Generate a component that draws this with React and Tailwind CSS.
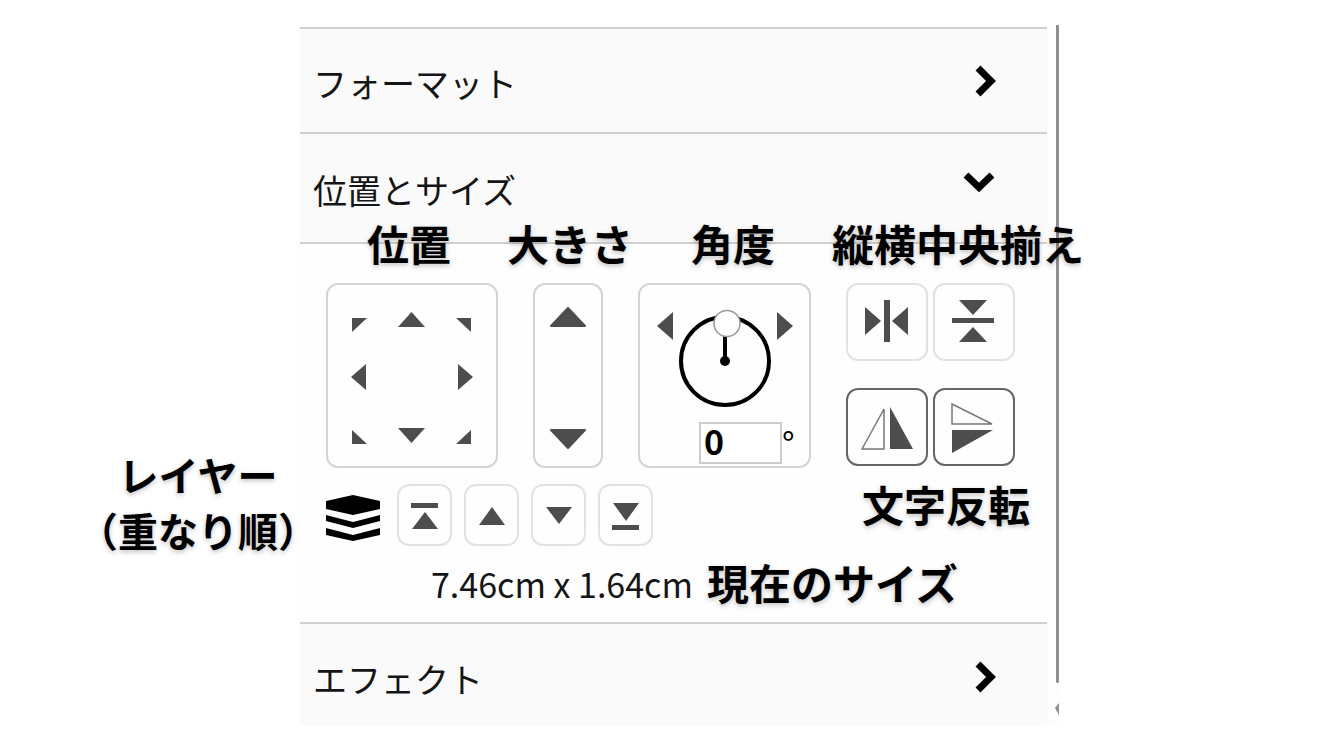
import React, { useState } from 'react';

const moveArrows = [
  { label: '左上へ移動', points: '18,28 33,28 18,42' },
  { label: '上へ移動', points: '12,37 39,37 25.5,22' },
  { label: '右上へ移動', points: '18,28 33,28 33,42' },
  { label: '左へ移動', points: '17,30 32,17 32,43' },
  null,
  { label: '右へ移動', points: '20,17 35,30 20,43' },
  { label: '左下へ移動', points: '18,26 18,40 33,40' },
  { label: '下へ移動', points: '12,24 39,24 25.5,39' },
  { label: '右下へ移動', points: '33,26 33,40 18,40' },
];

const layerButtons = [
  { label: '最前面へ', d: 'M2 4h27v5H2zM16 13L29 30H3z' },
  { label: '前面へ', d: 'M16 8L29 26H3z' },
  { label: '背面へ', d: 'M3 8H29L16 25z' },
  { label: '最背面へ', d: 'M3 4H29L16 22zM2 26h27v5H2z' },
];

const alignButtons = [
  { label: '左右中央揃え', d: 'M25 6h6v42h-6zM6 13L22 27L6 41zM49 13L33 27L49 41z' },
  { label: '上下中央揃え', d: 'M13 6H41L27 21zM6 24h42v5H6zM27 33L41 48H13z' },
];

const flipButtons = [
  { label: '左右反転', outline: 'M3 50L25 10V50z', d: 'M31 8V50H54z' },
  { label: '上下反転', outline: 'M6 5V25H46z', d: 'M6 31H47L6 54z' },
];

const noteClass =
  'whitespace-nowrap leading-[56px] font-bold [text-shadow:0_2px_5px_rgba(0,0,0,0.25)]';

const Chevron = ({ open }) =>
  open ? (
    <svg className="w-8 h-8 mr-[52px] mb-3" viewBox="0 0 32 32" fill="none" stroke="#000" strokeWidth="7">
      <path d="M3 9L16 21.5L29 9" />
    </svg>
  ) : (
    <svg className="w-8 h-8 mr-[46px]" viewBox="0 0 32 32" fill="none" stroke="#000" strokeWidth="7">
      <path d="M9 3L22 16L9 29" />
    </svg>
  );

const SectionHeader = ({ title, open, className }) => (
  <button
    type="button"
    aria-expanded={Boolean(open)}
    className={`flex w-full items-center justify-between border-t-2 border-[#d0d0d0] bg-[#fafafa] pl-[13px] text-left ${className}`}
  >
    <span className="pt-1 text-[34px] leading-[50px] text-[#151515]">{title}</span>
    <Chevron open={open} />
  </button>
);

const PositionPad = () => (
  <div className="relative w-[172px] h-[185px] shrink-0 rounded-xl border-2 border-[#d4d4d4]">
    <span className={`${noteClass} absolute bottom-full left-[39px] mb-3.5 text-[42px]`}>位置</span>
    <div className="grid grid-cols-3 px-1.5 py-[5px]">
      {moveArrows.map((arrow, i) =>
        arrow ? (
          <button key={arrow.label} type="button" aria-label={arrow.label} className="w-[52px] h-[57px]">
            <svg className="w-full h-full" viewBox="0 0 52 57" fill="#4d4d4d">
              <polygon points={arrow.points} />
            </svg>
          </button>
        ) : (
          <span key={i} />
        )
      )}
    </div>
  </div>
);

const SizePad = () => (
  <div className="relative flex w-[70px] h-[185px] shrink-0 flex-col justify-between rounded-xl border-2 border-[#d4d4d4]">
    <span className={`${noteClass} absolute bottom-full -left-7 mb-3.5 text-[42px]`}>大きさ</span>
    <button type="button" aria-label="大きくする">
      <svg className="w-full h-[60px]" viewBox="0 0 66 60" fill="#4d4d4d" stroke="#4d4d4d" strokeWidth="2" strokeLinejoin="round">
        <polygon points="33,23 50,41 16,41" />
      </svg>
    </button>
    <button type="button" aria-label="小さくする">
      <svg className="w-full h-[60px]" viewBox="0 0 66 60" fill="#4d4d4d" stroke="#4d4d4d" strokeWidth="2" strokeLinejoin="round">
        <polygon points="16,24 50,24 33,42" />
      </svg>
    </button>
  </div>
);

const AnglePad = () => {
  const [angle, setAngle] = useState('0');

  return (
    <div className="relative w-[173px] h-[185px] shrink-0 rounded-xl border-2 border-[#d4d4d4] pt-[23px]">
      <label htmlFor="angle" className={`${noteClass} absolute bottom-full left-[51px] mb-3.5 text-[42px]`}>
        角度
      </label>
      <div className="flex items-start justify-center gap-[5px]">
        <button type="button" aria-label="左に回転" className="mt-1">
          <svg className="w-4 h-7" viewBox="0 0 16 28" fill="#4d4d4d">
            <polygon points="0,14 16,0 16,28" />
          </svg>
        </button>
        <svg className="w-[94px] h-[100px]" viewBox="0 0 94 100" fill="none">
          <circle cx="47" cy="53" r="44" stroke="#000" strokeWidth="4" />
          <path d="M47 28V53" stroke="#000" strokeWidth="4" />
          <circle cx="47" cy="53" r="5" fill="#000" />
          <circle cx="49" cy="15.5" r="13" fill="#fff" stroke="#999" strokeWidth="1.5" />
        </svg>
        <button type="button" aria-label="右に回転" className="mt-1">
          <svg className="w-4 h-7" viewBox="0 0 16 28" fill="#4d4d4d">
            <polygon points="16,14 0,0 0,28" />
          </svg>
        </button>
      </div>
      <div className="mt-3.5 ml-[59px] flex items-start">
        <input
          id="angle"
          type="text"
          value={angle}
          onChange={(e) => setAngle(e.target.value)}
          className="w-[83px] h-[42px] border-2 border-[#ccc] bg-white pb-1.5 pl-[3px] text-[34px] leading-[32px] font-bold"
        />
        <span className="text-[34px] leading-[42px]">°</span>
      </div>
    </div>
  );
};

const AlignAndFlip = () => (
  <div className="relative grid shrink-0 grid-cols-[82px_82px] gap-x-[5px] gap-y-[27px]">
    <span className={`${noteClass} absolute bottom-full -left-3.5 mb-3 text-[42px]`}>縦横中央揃え</span>
    {alignButtons.map((b) => (
      <button
        key={b.label}
        type="button"
        aria-label={b.label}
        className="flex h-[78px] items-center justify-center rounded-xl border-2 border-[#e2e2e2]"
      >
        <svg className="w-14 h-14" viewBox="0 0 56 56" fill="#4d4d4d">
          <path d={b.d} />
        </svg>
      </button>
    ))}
    {flipButtons.map((b) => (
      <button
        key={b.label}
        type="button"
        aria-label={b.label}
        className="flex h-[78px] items-center justify-center rounded-xl border-2 border-[#666]"
      >
        <svg className="w-14 h-14" viewBox="0 0 56 56" fill="#4d4d4d">
          <path d={b.outline} fill="none" stroke="#777" strokeWidth="1.5" />
          <path d={b.d} />
        </svg>
      </button>
    ))}
    <span className={`${noteClass} absolute top-full left-4 mt-2.5 text-[42px]`}>文字反転</span>
  </div>
);

const LayerRow = () => (
  <div className="relative mt-4 flex items-center gap-3">
    <p className={`${noteClass} absolute right-full -bottom-3 mr-2 text-center text-[40px]`}>
      レイヤー
      <br />
      （重なり順）
    </p>
    <svg className="mr-[5px] w-[54px] h-[52px]" viewBox="0 -6 54 52" fill="#000">
      <path d="M0 6L27 0L54 6V14L27 20L0 14z" />
      <path d="M0 20L27 27L54 20V26L27 33L0 26z" />
      <path d="M0 33L27 40L54 33V40L27 46L0 40z" />
    </svg>
    {layerButtons.map((b) => (
      <button
        key={b.label}
        type="button"
        aria-label={b.label}
        className="flex w-[55px] h-[62px] items-center justify-center rounded-xl border-2 border-[#e2e2e2]"
      >
        <svg className="w-8 h-8" viewBox="0 0 32 32" fill="#4d4d4d">
          <path d={b.d} />
        </svg>
      </button>
    ))}
  </div>
);

const App = () => {
  return (
    <main
      lang="ja"
      className="bg-white py-[25px] pl-[300px] text-black font-['Noto_Sans_CJK_JP','Noto_Sans',sans-serif]"
    >
      <div className="flex max-w-[759px] bg-[#fdfdfd]">
        <div className="flex-1 pt-0.5">
          <SectionHeader title="フォーマット" className="h-[105px]" />
          <SectionHeader title="位置とサイズ" open className="h-[110px]" />
          <section className="border-t-2 border-[#d0d0d0] bg-[#fefefe] pt-[39px] pl-[26px]">
            <div className="flex items-start gap-[35px]">
              <PositionPad />
              <SizePad />
              <AnglePad />
              <AlignAndFlip />
            </div>
            <LayerRow />
            <div className="flex h-[76px] items-start gap-3.5 pt-2 pl-[105px]">
              <span className="text-[34px] leading-[60px] text-[#151515]">7.46cm x 1.64cm</span>
              <span className={`${noteClass} text-[42px]`}>現在のサイズ</span>
            </div>
          </section>
          <SectionHeader title="エフェクト" className="h-[103px] pt-1" />
        </div>
        <div className="flex w-3 flex-col items-end">
          <div className="w-[3px] flex-1 rounded-b-full bg-[#8f8f8f]" />
          <svg className="mt-5 mb-2.5 w-1 h-3" viewBox="0 0 4 12" fill="#8f8f8f">
            <polygon points="0,5 4,0 4,12" />
          </svg>
        </div>
      </div>
    </main>
  );
};

export default App;
